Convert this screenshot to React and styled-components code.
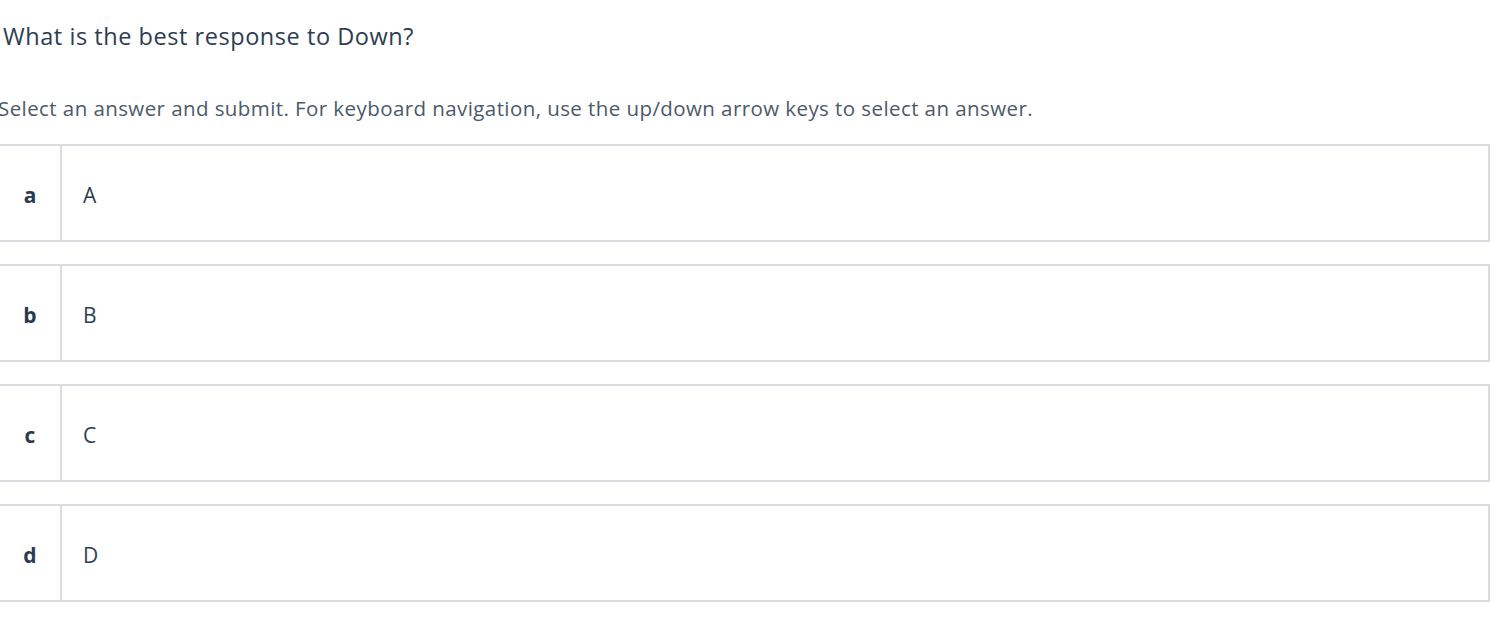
import React from "react";
import styled, { createGlobalStyle } from "styled-components";

const GlobalStyle = createGlobalStyle`
  body {
    margin: 0;
    background: #ffffff;
    font-family: "Open Sans", "Noto Sans", sans-serif;
  }
`;

const Page = styled.div`
  margin-left: -2px;
  width: 1492px;
  color: #2d3d4f;
`;

const Question = styled.h2`
  margin: 0;
  padding: 20px 0 0 5px;
  font-size: 23.5px;
  font-weight: 400;
  line-height: 32px;
  letter-spacing: 0.55px;
  color: #2d3d4f;
`;

const Hint = styled.p`
  margin: 42px 0 0 0;
  font-size: 20.5px;
  line-height: 28px;
  letter-spacing: 0.42px;
  color: #4b5a6a;
`;

const Options = styled.div`
  display: flex;
  flex-direction: column;
  gap: 22px;
  margin-top: 22px;
`;

const Option = styled.div`
  display: flex;
  height: 94px;
  border: 2px solid #d9dde1;
  background: #ffffff;
`;

const Key = styled.div`
  width: 60px;
  flex: none;
  display: flex;
  align-items: center;
  justify-content: center;
  padding-top: 3px;
  border-right: 2px solid #d9dde1;
  font-size: 21px;
  font-weight: 700;
  color: #2b3b4d;
`;

const Label = styled.div`
  display: flex;
  align-items: center;
  padding: 3px 0 0 21px;
  font-size: 21px;
  color: #2d3d4f;
`;

const answers = [
  { key: "a", label: "A" },
  { key: "b", label: "B" },
  { key: "c", label: "C" },
  { key: "d", label: "D" },
];

export default function App() {
  return (
    <>
      <GlobalStyle />
      <Page>
        <Question>What is the best response to Down?</Question>
        <Hint>
          Select an answer and submit. For keyboard navigation, use the up/down
          arrow keys to select an answer.
        </Hint>
        <Options>
          {answers.map((a) => (
            <Option key={a.key}>
              <Key>{a.key}</Key>
              <Label>{a.label}</Label>
            </Option>
          ))}
        </Options>
      </Page>
    </>
  );
}
